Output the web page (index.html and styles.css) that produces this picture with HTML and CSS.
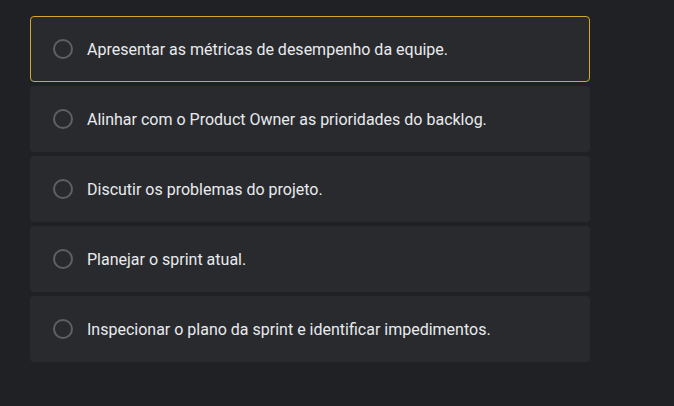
FILE: index.html
```html
<!DOCTYPE html>
<html lang="pt">
<head>
<meta charset="utf-8">
<link rel="stylesheet" href="styles.css">
</head>
<body>
<div class="options">
  <label class="option selected"><span class="radio"></span><span class="text">Apresentar as métricas de desempenho da equipe.</span></label>
  <label class="option"><span class="radio"></span><span class="text">Alinhar com o Product Owner as prioridades do backlog.</span></label>
  <label class="option"><span class="radio"></span><span class="text">Discutir os problemas do projeto.</span></label>
  <label class="option"><span class="radio"></span><span class="text">Planejar o sprint atual.</span></label>
  <label class="option"><span class="radio"></span><span class="text">Inspecionar o plano da sprint e identificar impedimentos.</span></label>
</div>
</body>
</html>
```
FILE: styles.css
```css
html, body {
  margin: 0;
  padding: 0;
  background: #202124;
  font-family: Roboto, "Liberation Sans", sans-serif;
}
.options {
  display: flex;
  flex-direction: column;
  gap: 4px;
  width: 560px;
  padding: 16px 0 0 30px;
}
.option {
  box-sizing: border-box;
  height: 66px;
  display: flex;
  align-items: center;
  padding-left: 22px;
  background: #292a2d;
  border: 1px solid transparent;
  border-radius: 4px;
}
.option.selected {
  border-color: #d4a72c;
}
.radio {
  box-sizing: border-box;
  width: 20px;
  height: 20px;
  border: 2px solid #5f6064;
  border-radius: 50%;
  flex: none;
}
.text {
  margin-left: 14px;
  color: #e8eaed;
  font-size: 16px;
}
```
